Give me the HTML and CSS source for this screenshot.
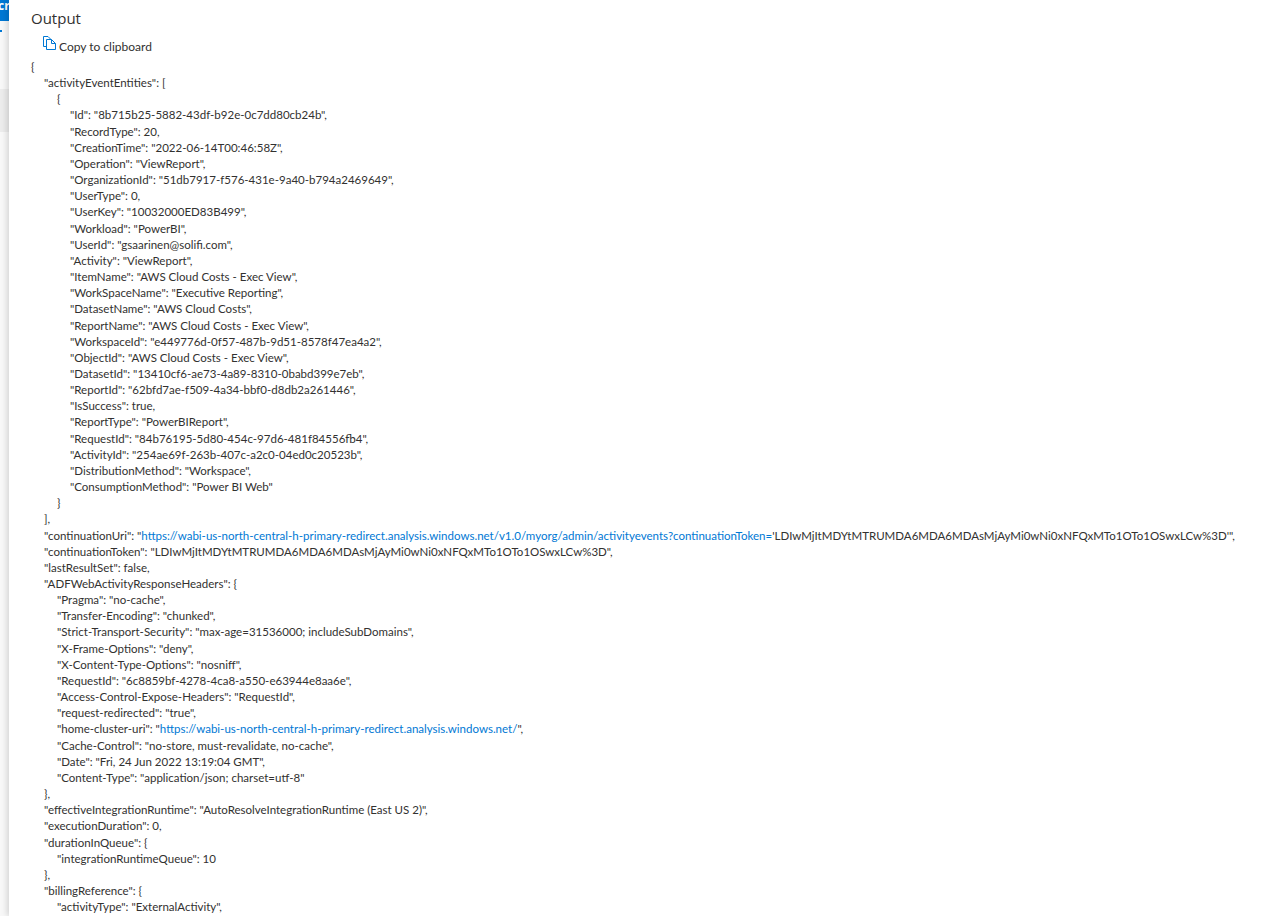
FILE: index.html
```html
<!DOCTYPE html>
<html lang="en">
    <head>
        <meta charset="UTF-8" />
        <title>Output</title>
        <link rel="stylesheet" href="styles.css">
    </head>
    <body>
        <div class="app-container">
            <div class="side-strip">
                <div class="strip-header">cr</div>
                <div class="strip-arrow"></div>
                <div class="strip-selected"></div>
            </div>
            <div class="output-panel">
                <h2 class="output-title">Output</h2>
                <div class="copy-row">
                    <svg class="copy-icon" width="13" height="14" viewBox="0 0 13 14" fill="none" stroke="#0078d4" stroke-width="1">
                        <path d="M3.5 10.5H0.5V0.5H5L7.5 3"/>
                        <path d="M3.5 3.5H8.5L12.5 7.5V13.5H3.5Z"/>
                        <path d="M8.5 3.5V7.5H12.5"/>
                    </svg>
                    <span>Copy to clipboard</span>
                </div>
                <div class="json-view">
                    <div class="line">{</div>
                    <div class="line l1">"activityEventEntities": [</div>
                    <div class="line l2">{</div>
                    <div class="line l3">"Id": "8b715b25-5882-43df-b92e-0c7dd80cb24b",</div>
                    <div class="line l3">"RecordType": 20,</div>
                    <div class="line l3">"CreationTime": "2022-06-14T00:46:58Z",</div>
                    <div class="line l3">"Operation": "ViewReport",</div>
                    <div class="line l3">"OrganizationId": "51db7917-f576-431e-9a40-b794a2469649",</div>
                    <div class="line l3">"UserType": 0,</div>
                    <div class="line l3">"UserKey": "10032000ED83B499",</div>
                    <div class="line l3">"Workload": "PowerBI",</div>
                    <div class="line l3">"UserId": "gsaarinen@solifi.com",</div>
                    <div class="line l3">"Activity": "ViewReport",</div>
                    <div class="line l3">"ItemName": "AWS Cloud Costs - Exec View",</div>
                    <div class="line l3">"WorkSpaceName": "Executive Reporting",</div>
                    <div class="line l3">"DatasetName": "AWS Cloud Costs",</div>
                    <div class="line l3">"ReportName": "AWS Cloud Costs - Exec View",</div>
                    <div class="line l3">"WorkspaceId": "e449776d-0f57-487b-9d51-8578f47ea4a2",</div>
                    <div class="line l3">"ObjectId": "AWS Cloud Costs - Exec View",</div>
                    <div class="line l3">"DatasetId": "13410cf6-ae73-4a89-8310-0babd399e7eb",</div>
                    <div class="line l3">"ReportId": "62bfd7ae-f509-4a34-bbf0-d8db2a261446",</div>
                    <div class="line l3">"IsSuccess": true,</div>
                    <div class="line l3">"ReportType": "PowerBIReport",</div>
                    <div class="line l3">"RequestId": "84b76195-5d80-454c-97d6-481f84556fb4",</div>
                    <div class="line l3">"ActivityId": "254ae69f-263b-407c-a2c0-04ed0c20523b",</div>
                    <div class="line l3">"DistributionMethod": "Workspace",</div>
                    <div class="line l3">"ConsumptionMethod": "Power BI Web"</div>
                    <div class="line l2">}</div>
                    <div class="line l1">],</div>
                    <div class="line l1">"continuationUri": "<a class="json-link">https://wabi-us-north-central-h-primary-redirect.analysis.windows.net/v1.0/myorg/admin/activityevents?continuationToken=</a>'LDIwMjItMDYtMTRUMDA6MDA6MDAsMjAyMi0wNi0xNFQxMTo1OTo1OSwxLCw%3D'",</div>
                    <div class="line l1">"continuationToken": "LDIwMjItMDYtMTRUMDA6MDA6MDAsMjAyMi0wNi0xNFQxMTo1OTo1OSwxLCw%3D",</div>
                    <div class="line l1">"lastResultSet": false,</div>
                    <div class="line l1">"ADFWebActivityResponseHeaders": {</div>
                    <div class="line l2">"Pragma": "no-cache",</div>
                    <div class="line l2">"Transfer-Encoding": "chunked",</div>
                    <div class="line l2">"Strict-Transport-Security": "max-age=31536000; includeSubDomains",</div>
                    <div class="line l2">"X-Frame-Options": "deny",</div>
                    <div class="line l2">"X-Content-Type-Options": "nosniff",</div>
                    <div class="line l2">"RequestId": "6c8859bf-4278-4ca8-a550-e63944e8aa6e",</div>
                    <div class="line l2">"Access-Control-Expose-Headers": "RequestId",</div>
                    <div class="line l2">"request-redirected": "true",</div>
                    <div class="line l2">"home-cluster-uri": "<a class="json-link">https://wabi-us-north-central-h-primary-redirect.analysis.windows.net/</a>",</div>
                    <div class="line l2">"Cache-Control": "no-store, must-revalidate, no-cache",</div>
                    <div class="line l2">"Date": "Fri, 24 Jun 2022 13:19:04 GMT",</div>
                    <div class="line l2">"Content-Type": "application/json; charset=utf-8"</div>
                    <div class="line l1">},</div>
                    <div class="line l1">"effectiveIntegrationRuntime": "AutoResolveIntegrationRuntime (East US 2)",</div>
                    <div class="line l1">"executionDuration": 0,</div>
                    <div class="line l1">"durationInQueue": {</div>
                    <div class="line l2">"integrationRuntimeQueue": 10</div>
                    <div class="line l1">},</div>
                    <div class="line l1">"billingReference": {</div>
                    <div class="line l2">"activityType": "ExternalActivity",</div>
                </div>
            </div>
        </div>
    </body>
</html>
```
FILE: styles.css
```css
html, body {
    margin: 0;
    height: 100%;
    overflow: hidden;
}

body {
    font-family: 'Lato', 'Open Sans', sans-serif;
    color: #323130;
    background-color: white;
}

.app-container {
    display: flex;
    height: 916px;
    overflow: hidden;
}

.side-strip {
    width: 9px;
    flex-shrink: 0;
    background-color: #f8f8f8;
    overflow: hidden;
}

.strip-header {
    height: 21px;
    background-color: #0078d4;
    color: white;
    font-family: 'Open Sans', sans-serif;
    font-size: 12px;
    font-weight: bold;
    line-height: 12px;
    text-indent: -2px;
}

.strip-arrow {
    height: 68px;
    background: radial-gradient(circle 1.5px at 1px 10px, #0078d4 100%, transparent 100%);
}

.strip-selected {
    height: 43px;
    background-color: #ececec;
}

.output-panel {
    flex: 1;
    min-width: 0;
    padding: 8px 0 0 22px;
    box-shadow: -2px 0 6px rgba(0, 0, 0, 0.15);
    white-space: nowrap;
}

.output-title {
    margin: 0;
    font-family: 'Open Sans', sans-serif;
    font-size: 15px;
    font-weight: 500;
    line-height: 20px;
}

.copy-row {
    display: flex;
    align-items: center;
    gap: 3px;
    height: 22px;
    margin: 7px 0 0 12px;
    font-size: 12px;
}

.copy-icon {
    margin-top: -6px;
}

.json-view {
    margin-top: 2px;
    font-size: 11.52px;
    line-height: 16.15px;
}

.l1 {
    padding-left: 13px;
}

.l2 {
    padding-left: 26px;
}

.l3 {
    padding-left: 39px;
}

.json-link {
    color: #0078d4;
}
```
